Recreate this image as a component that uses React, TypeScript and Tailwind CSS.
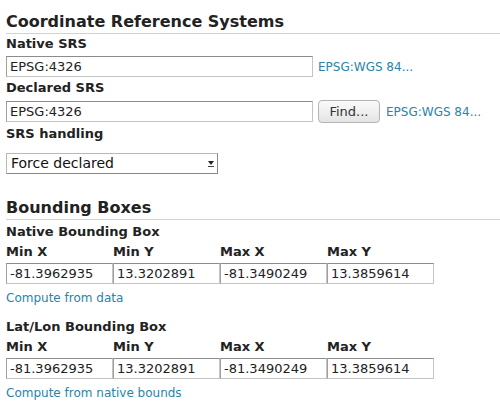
import React from 'react';

const font = { fontFamily: '"DejaVu Sans", "Open Sans", sans-serif' };

const Field: React.FC<{ value: string; className?: string }> = ({ value, className = '' }) => (
  <input
    readOnly
    value={value}
    className={`h-[21px] border border-[#c4c4c4] border-t-[#8c8c8c] border-l-[#a0a0a0] bg-white px-[3px] text-[13px] text-[#222] outline-none ${className}`}
  />
);

const BBox: React.FC<{ title: string; link: string }> = ({ title, link }) => {
  const cols = [
    ['Min X', '-81.3962935'],
    ['Min Y', '13.3202891'],
    ['Max X', '-81.3490249'],
    ['Max Y', '13.3859614'],
  ];
  return (
    <div>
      <div className="text-[13px] font-bold text-[#222] leading-[16px]">{title}</div>
      <div className="mt-[4px] flex">
        {cols.map(([label, value]) => (
          <div key={label} className="flex flex-col w-[107px]">
            <span className="text-[13px] font-bold text-[#222] leading-[16px]">{label}</span>
            <Field value={value} className="mt-[3px] w-[107px]" />
          </div>
        ))}
      </div>
      <a className="mt-[7px] block text-[12px] text-[#2a84a8] leading-[15px]">{link}</a>
    </div>
  );
};

export default function App() {
  return (
    <div className="w-[500px] h-[409px] bg-white overflow-hidden pl-[6px] pt-[12px]" style={font}>
      <h2 className="text-[16px] font-bold text-[#222] leading-[20px] border-b border-[#d6d6b4] pb-[1px]">
        Coordinate Reference Systems
      </h2>
      <div className="mt-[2px] text-[13px] font-bold text-[#222] leading-[16px]">Native SRS</div>
      <div className="mt-[4px] flex items-center">
        <Field value="EPSG:4326" className="w-[307px]" />
        <a className="ml-[5px] text-[12px] text-[#2a84a8]">EPSG:WGS 84...</a>
      </div>
      <div className="mt-[3px] text-[13px] font-bold text-[#222] leading-[16px]">Declared SRS</div>
      <div className="mt-[4px] flex items-center">
        <Field value="EPSG:4326" className="w-[307px]" />
        <button className="ml-[5px] h-[23px] w-[62px] rounded-[4px] border border-[#b4b4b4] bg-gradient-to-b from-[#fbfbfb] to-[#e4e4e4] text-[13px] text-[#333]">
          Find...
        </button>
        <a className="ml-[6px] text-[12px] text-[#2a84a8]">EPSG:WGS 84...</a>
      </div>
      <div className="mt-[3px] text-[13px] font-bold text-[#222] leading-[16px]">SRS handling</div>
      <div className="mt-[11px] relative w-[212px] h-[21px] border border-[#b8b8b8] border-r-[#888] border-b-[#888] bg-white flex items-center">
        <span className="pl-[4px] text-[14px] text-[#111]">Force declared</span>
        <span className="absolute right-[2px] top-[3px] bottom-[3px] w-[9px] flex flex-col items-center justify-center gap-[1px]">
          <span className="block w-0 h-0 border-l-[3px] border-r-[3px] border-t-[4px] border-l-transparent border-r-transparent border-t-[#222]" />
          <span className="block w-[6px] h-[1px] bg-[#444]" />
        </span>
      </div>

      <h2 className="mt-[24px] text-[16px] font-bold text-[#222] leading-[20px] border-b border-[#d6d6b4] pb-[1px]">
        Bounding Boxes
      </h2>
      <div className="mt-[4px]">
        <BBox title="Native Bounding Box" link="Compute from data" />
      </div>
      <div className="mt-[13px]">
        <BBox title="Lat/Lon Bounding Box" link="Compute from native bounds" />
      </div>
    </div>
  );
}
